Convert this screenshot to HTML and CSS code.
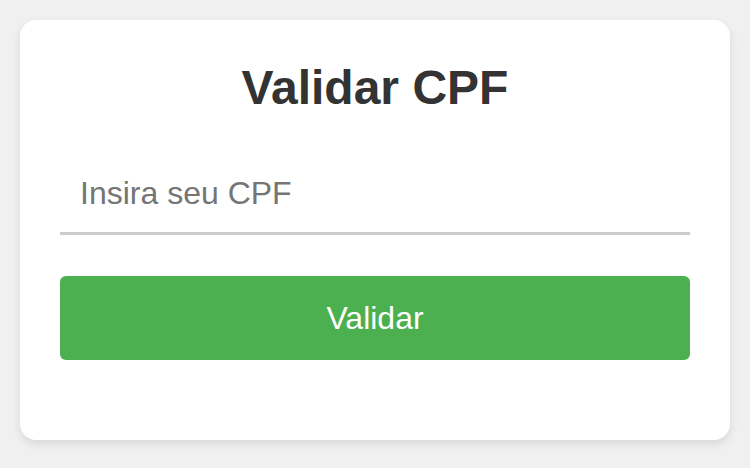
FILE: index.html
```html
<!DOCTYPE html>
<html lang="pt">
<head>
<meta charset="utf-8">
<title>Validar CPF</title>
<link rel="stylesheet" href="styles.css">
</head>
<body>
<div class="card">
  <h1 class="title">Validar CPF</h1>
  <form class="form">
    <input class="cpf-input" type="text" placeholder="Insira seu CPF">
    <button class="submit" type="button">Validar</button>
  </form>
</div>
</body>
</html>
```
FILE: styles.css
```css
* { box-sizing: border-box; }
html, body { margin: 0; height: 100%; }
body {
  background: #f0f0f0;
  padding: 20px;
  font-family: "Liberation Sans", Arial, sans-serif;
}
.card {
  background: #fff;
  border-radius: 16px;
  box-shadow: 0 4px 10px rgba(0,0,0,0.1);
  padding: 40px;
  height: 420px;
}
.title {
  margin: 0 0 40px;
  text-align: center;
  font-size: 48px;
  font-weight: bold;
  color: #333;
  line-height: 55px;
}
.form {
  display: flex;
  flex-direction: column;
}
.cpf-input {
  width: 100%;
  font-family: inherit;
  font-size: 32px;
  line-height: 37px;
  height: 80px;
  padding: 20px;
  border: none;
  border-bottom: 3px solid #ccc;
  outline: none;
  color: #333;
  margin: 0 0 41px;
}
.cpf-input::placeholder { color: #757575; }
.submit {
  width: 100%;
  height: 84px;
  background: #4caf50;
  color: #fff;
  border: none;
  border-radius: 6px;
  font-family: inherit;
  font-size: 32px;
  cursor: pointer;
}
```
